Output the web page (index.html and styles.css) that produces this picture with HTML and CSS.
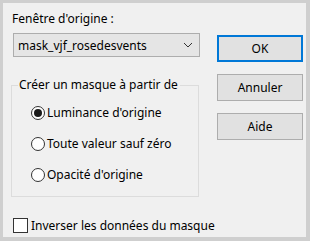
FILE: index.html
```html
<!DOCTYPE html>
<html lang="fr">

<head>
    <meta charset="utf-8">
    <title>Charger un masque</title>
    <link rel="stylesheet" href="styles.css">
</head>

<body>
    <div class="dialog">
        <div class="main">
            <div class="field-label">Fenêtre d'origine :</div>
            <div class="select">
                <span>mask_vjf_rosedesvents</span>
                <svg class="chevron" width="10" height="6" viewBox="0 0 10 6">
                    <path d="M1 1 L5 5 L9 1" fill="none" stroke="#333" stroke-width="1"/>
                </svg>
            </div>

            <div class="group">
                <span class="group-title">Créer un masque à partir de</span>
                <div class="radio-list">
                    <div class="radio-row">
                        <span class="radio checked"></span>
                        <span>Luminance d'origine</span>
                    </div>
                    <div class="radio-row">
                        <span class="radio"></span>
                        <span>Toute valeur sauf zéro</span>
                    </div>
                    <div class="radio-row">
                        <span class="radio"></span>
                        <span>Opacité d'origine</span>
                    </div>
                </div>
            </div>

            <div class="check-row">
                <span class="checkbox"></span>
                <span>Inverser les données du masque</span>
            </div>
        </div>

        <div class="actions">
            <div class="btn default">OK</div>
            <div class="btn">Annuler</div>
            <div class="btn">Aide</div>
        </div>
    </div>
</body>

</html>
```

FILE: styles.css
```css
html {
    font-family: 'Noto Sans', sans-serif;
    font-size: 12px;
    color: #000;
}

body {
    margin: 0px;
    padding: 3px 4px 4px 3px;
    background-color: #cfcfcf;
    height: 241px;
    box-sizing: border-box;
}

.dialog {
    display: flex;
    height: 100%;
    background-color: #f0f0f0;
    padding: 8px 0px 0px 8px;
    box-sizing: border-box;
}

.main {
    width: 190px;
    display: flex;
    flex-direction: column;
}

.field-label {
    line-height: 16px;
    margin-left: 1px;
}

.select {
    display: flex;
    align-items: center;
    justify-content: space-between;
    height: 24px;
    box-sizing: border-box;
    margin: 6px 0px 0px 2px;
    width: 187px;
    padding: 0px 6px 0px 4px;
    background-color: #e5e5e5;
    border: 1px solid #adadad;
}

.group {
    display: flex;
    flex-direction: column;
    margin-top: 28px;
    padding-bottom: 6px;
    border: 1px solid #dcdcdc;
    width: 188px;
    box-sizing: border-box;
}

.group-title {
    align-self: flex-start;
    margin: -9px 0px 0px 6px;
    padding: 0px 2px 0px 1px;
    line-height: 16px;
    background-color: #f0f0f0;
}

.radio-list {
    display: flex;
    flex-direction: column;
    margin-top: 4px;
}

.radio-row {
    display: flex;
    align-items: center;
    height: 31px;
    padding-left: 19px;
}

.radio {
    flex-shrink: 0;
    width: 14px;
    height: 14px;
    box-sizing: border-box;
    border: 1px solid #333;
    border-radius: 50%;
    background-color: #fff;
    margin-right: 2px;
    display: flex;
    align-items: center;
    justify-content: center;
}

.radio.checked::after {
    content: "";
    width: 8px;
    height: 8px;
    border-radius: 50%;
    background-color: #1a1a1a;
}

.check-row {
    display: flex;
    align-items: center;
    white-space: nowrap;
    margin: 20px 0px 0px 2px;
}

.checkbox {
    flex-shrink: 0;
    width: 15px;
    height: 15px;
    box-sizing: border-box;
    border: 1px solid #333;
    background-color: #fff;
    margin-right: 3px;
}

.actions {
    display: flex;
    flex-direction: column;
    gap: 12px;
    margin: 24px 0px 0px 16px;
}

.btn {
    width: 86px;
    height: 27px;
    box-sizing: border-box;
    border: 1px solid #adadad;
    background-color: #e1e1e1;
    display: flex;
    align-items: center;
    justify-content: center;
}

.btn.default {
    border: 2px solid #0078d7;
}
```
